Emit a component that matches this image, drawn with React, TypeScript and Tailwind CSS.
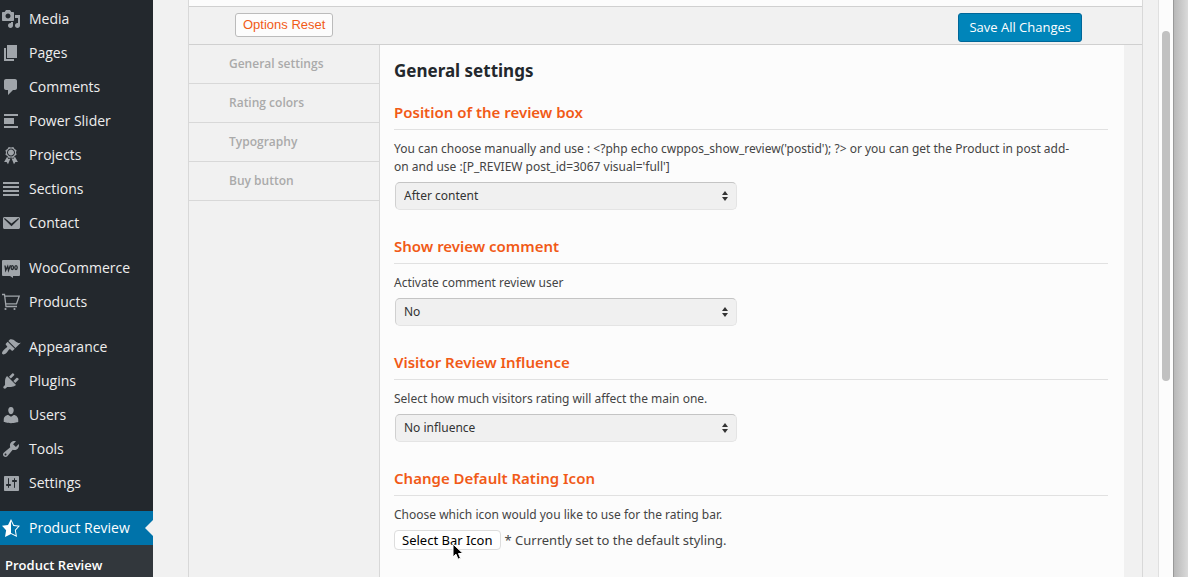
import type { ReactNode } from "react";

type MenuItem = { label: string; icon: ReactNode };

const path = (d: string) => <path fillRule="evenodd" d={d} />;

const menuGroups: MenuItem[][] = [
  [
    {
      label: "Media",
      icon: path(
        "M13 11V4c0-.55-.45-1-1-1h-1.67L9 1H5L3.67 3H2c-.55 0-1 .45-1 1v7c0 .55.45 1 1 1h10c.55 0 1-.45 1-1zM7 4.5c1.38 0 2.5 1.12 2.5 2.5S8.38 9.5 7 9.5 4.5 8.38 4.5 7 5.62 4.5 7 4.5zM14 6h5v10.5c0 1.38-1.12 2.5-2.5 2.5S14 17.88 14 16.5s1.12-2.5 2.5-2.5c.17 0 .34.02.5.05V9h-3V6zm-4 8.05V13h2v3.5c0 1.38-1.12 2.5-2.5 2.5S7 17.88 7 16.5 8.12 14 9.5 14c.17 0 .34.02.5.05z",
      ),
    },
    { label: "Pages", icon: path("M6 15V2h10v13H6zm-1 1h8v2H3V5h2v11z") },
    {
      label: "Comments",
      icon: path(
        "M5 2h9c1.1 0 2 .9 2 2v7c0 1.1-.9 2-2 2h-2l-5 5v-5H5c-1.1 0-2-.9-2-2V4c0-1.1.9-2 2-2z",
      ),
    },
    { label: "Power Slider", icon: path("M3 3h14v2H3zM3 7h10v6H3zM3 15h14v2H3z") },
    {
      label: "Projects",
      icon: path(
        "M4.46 5.16L5 7.46l-.54 2.29 2.01 1.24L7.7 13l2.3-.54 2.3.54 1.23-2.01 2.01-1.24L15 7.46l.54-2.3-2-1.24-1.24-2.01-2.3.55-2.29-.54-1.25 2zm5.55 6.34C7.79 11.5 6 9.71 6 7.49c0-2.2 1.79-3.99 4.01-3.99 2.2 0 3.99 1.79 3.99 3.99 0 2.22-1.79 4.01-3.99 4.01zM9.99 10.5C8.33 10.5 7 9.16 7 7.5c0-1.65 1.33-3 2.99-3S13 5.85 13 7.5c0 1.66-1.35 3-3.01 3zM13.83 11.6l-1.28 2.24-2.08-.47L13 19.2l1.4-2.2h2.5zM6.13 11.67l1.25 2.25 2.13-.51L7 19.2 5.6 17H3.1z",
      ),
    },
    { label: "Sections", icon: path("M2 3h16v2H2zM2 7h16v2H2zM2 11h16v2H2zM2 15h16v2H2z") },
    {
      label: "Contact",
      icon: path(
        "M3.5 4h14c.8 0 1.5.7 1.5 1.5v9c0 .8-.7 1.5-1.5 1.5h-14c-.8 0-1.5-.7-1.5-1.5v-9C2 4.7 2.7 4 3.5 4zM4 5.3c-.6-.3-1.2.3-.7.9l7.2 7 7.2-7c.5-.6-.1-1.2-.7-.9l-6.5 5.2z",
      ),
    },
  ],
  [
    {
      label: "WooCommerce",
      icon: (
        <>
          <path d="M2 2h16a1 1 0 0 1 1 1v14a1 1 0 0 1-1 1h-6v2l-3-2H2a1 1 0 0 1-1-1V3a1 1 0 0 1 1-1z" />
          <path
            d="M4 7.5l.7 4.8 2-4 .8 4 2-5"
            fill="none"
            stroke="#23282d"
            strokeWidth="1.4"
          />
          <ellipse cx="11.3" cy="9.6" rx="1.2" ry="1.9" fill="none" stroke="#23282d" strokeWidth="1.3" />
          <ellipse cx="15" cy="9.6" rx="1.2" ry="1.9" fill="none" stroke="#23282d" strokeWidth="1.3" />
        </>
      ),
    },
    {
      label: "Products",
      icon: (
        <>
          <path
            d="M1 2.5h2.5l1.5 12h11M4 4.2h14.2l-2.7 7.600H5"
            fill="none"
            stroke="currentColor"
            strokeWidth="1.3"
          />
          <circle cx="4.500" cy="17" r="1.1" />
          <circle cx="13.500" cy="17" r="1.1" />
        </>
      ),
    },
  ],
  [
    {
      label: "Appearance",
      icon: path(
        "M14.48 11.06L7.41 3.99l1.5-1.5c.5-.56 2.3-.47 3.51.32 1.21.8 1.43 1.28 2.91 2.1 1.18.64 2.45 1.26 4.45.85zm-.71.71L6.7 4.7 4.93 6.47c-.39.39-.39 1.02 0 1.41l1.06 1.06c.39.39.39 1.03 0 1.42-.6.6-1.43 1.11-2.21 1.69-.35.26-.7.53-1.01.84C1.43 14.23.4 16.08 1.4 17.07c.99 1 2.84-.03 4.18-1.36.31-.31.58-.66.85-1.02.57-.78 1.08-1.61 1.69-2.21.39-.39 1.02-.39 1.41 0l1.06 1.06c.39.39 1.02.39 1.41 0z",
      ),
    },
    {
      label: "Plugins",
      icon: path(
        "M13.11 4.36L9.87 7.6 8 5.73l3.24-3.24c.35-.34 1.05-.2 1.56.32.52.51.66 1.21.31 1.55zm-8 1.77l.91-1.12 9.01 9.01-1.19.84c-.71.71-2.63 1.16-3.82 1.16H6.14L4.9 17.26c-.59.59-1.54.59-2.12 0-.59-.58-.59-1.53 0-2.12l1.24-1.24v-3.88c0-1.13.4-3.19 1.09-3.89zm7.26 3.97l3.24-3.24c.34-.35 1.04-.21 1.55.31.52.51.66 1.21.31 1.55l-3.24 3.25z",
      ),
    },
    {
      label: "Users",
      icon: path(
        "M10 9.25c-2.27 0-2.73-3.44-2.73-3.44C7 4.02 7.82 2 9.97 2c2.16 0 2.98 2.02 2.71 3.81 0 0-.41 3.44-2.68 3.44zm0 2.57L12.72 10c2.39 0 4.52 2.33 4.52 4.53v2.49s-3.65 1.13-7.24 1.13c-3.65 0-7.24-1.13-7.24-1.13v-2.49c0-2.25 1.94-4.48 4.47-4.48z",
      ),
    },
    {
      label: "Tools",
      icon: path(
        "M16.68 9.77c-1.34 1.34-3.3 1.67-4.95.99l-5.41 6.52c-.99.99-2.59.99-3.58 0s-.99-2.59 0-3.57l6.52-5.42c-.68-1.65-.35-3.61.99-4.95 1.28-1.28 3.12-1.62 4.72-1.06l-2.89 2.89 2.82 2.82 2.86-2.87c.53 1.58.18 3.39-1.08 4.65zM3.81 16.21c.4.39 1.04.39 1.43 0 .4-.4.4-1.04 0-1.43-.39-.4-1.03-.4-1.43 0-.39.39-.39 1.03 0 1.43z",
      ),
    },
    {
      label: "Settings",
      icon: path(
        "M18 16V4c0-.55-.45-1-1-1H4c-.55 0-1 .45-1 1v13c0 .55.45 1 1 1h13c.55 0 1-.45 1-1zM8 11h1c.55 0 1 .45 1 1s-.45 1-1 1H8v1.5c0 .28-.22.5-.5.5s-.5-.22-.5-.5V13H6c-.55 0-1-.45-1-1s.45-1 1-1h1V5.5c0-.28.22-.5.5-.5s.5.22.5.5V11zm5-2h-1c-.55 0-1-.45-1-1s.45-1 1-1h1V5.5c0-.28.22-.5.5-.5s.5.22.5.5V7h1c.55 0 1 .45 1 1s-.45 1-1 1h-1v5.5c0 .28-.22.5-.5.5s-.5-.22-.5-.5V9z",
      ),
    },
  ],
];

const tabs = ["General settings", "Rating colors", "Typography", "Buy button"];

function Icon({ children }: { children: ReactNode }) {
  return (
    <svg viewBox="0 0 20 20" className="size-5 shrink-0" fill="currentColor" aria-hidden="true">
      {children}
    </svg>
  );
}

function AdminMenu() {
  return (
    <nav className="w-[153px] shrink-0 bg-[#23282d] pt-0.5 font-['Open_Sans',sans-serif] text-sm text-[#eee]">
      {menuGroups.map((group) => (
        <ul key={group[0].label} className="mb-[11px]">
          {group.map((item) => (
            <li key={item.label}>
              <a href="#" className="flex h-[34px] items-center gap-2 pl-px">
                <span className="text-[#a0a5aa]">
                  <Icon>{item.icon}</Icon>
                </span>
                {item.label}
              </a>
            </li>
          ))}
        </ul>
      ))}
      <a href="#" className="relative flex h-[34px] items-center gap-2 bg-[#0073aa] pl-px text-white">
        <Icon>
          {path(
            "M10 1L7 7l-6 .75 4.13 4.62L4 19l6-3 6 3-1.12-6.63L19 7.75 13 7zm0 2.24l2.34 4.69 4.65.58-3.18 3.56.87 5.15-4.68-2.34v-11.64z",
          )}
        </Icon>
        Product Review
        <span className="absolute top-1/2 right-0 -translate-y-1/2 border-y-8 border-r-8 border-y-transparent border-r-[#f1f1f1]" />
      </a>
      <div className="bg-[#32373c] pt-2.5 pb-6 pl-[5px]">
        <a href="#" className="block text-[13px] leading-5 font-semibold text-white">
          Product Review
        </a>
      </div>
    </nav>
  );
}

function Section({
  id,
  title,
  description,
  children,
}: {
  id: string;
  title: string;
  description: ReactNode;
  children: ReactNode;
}) {
  return (
    <section className="mb-[26px]">
      <h3 className="mb-2.5 border-b border-[#e1e1e1] pb-[7px] text-[15px] leading-5 font-semibold text-[#f15a17]">
        {title}
      </h3>
      <label htmlFor={id} className="block text-xs leading-[18px] text-[#444]">
        {description}
      </label>
      {children}
    </section>
  );
}

function SelectField({ id, options }: { id: string; options: string[] }) {
  return (
    <div className="relative mt-1.5 ml-px w-[342px]">
      <select
        id={id}
        className="block h-7 w-full appearance-none rounded-[5px] border border-[#e4e4e4] border-t-[#c4c4c4] border-l-[#d0d0d0] bg-[#f0f0f0] px-2 text-xs text-[#333]"
      >
        {options.map((option) => (
          <option key={option}>{option}</option>
        ))}
      </select>
      <svg
        viewBox="0 0 6 10"
        className="pointer-events-none absolute top-[9px] right-[9px] h-2.5 w-1.5"
        fill="#333"
        aria-hidden="true"
      >
        <path d="M3 0l3 4H0zM3 10L0 6h6z" />
      </svg>
    </div>
  );
}

export default function App() {
  return (
    <div className="flex h-screen overflow-hidden bg-[#f1f1f1] font-['Noto_Sans',sans-serif]">
      <AdminMenu />
      <main className="ml-[35px] flex min-w-0 flex-1 flex-col border-x border-[#d8d8d8]">
        <div className="h-1.5 shrink-0 bg-[#fcfcfc]" />
        <header className="flex h-[39px] shrink-0 items-start justify-between border-y border-[#d0d0d0] pt-1.5 pr-[60px] pl-[46px]">
          <button className="h-6 rounded-[3px] border border-[#bbb] bg-[#fcfcfc] px-[7px] font-['Liberation_Sans',sans-serif] text-[13px] leading-[22px] text-[#f15a17]">
            Options Reset
          </button>
          <button className="h-[29px] rounded-[3px] border border-[#006799] bg-[#0085ba] px-2.5 font-['Open_Sans',sans-serif] text-[13px] text-white">
            Save All Changes
          </button>
        </header>
        <div className="flex min-h-0 flex-1">
          <ul className="w-[191px] shrink-0 border-r border-[#d8d8d8] font-['Open_Sans',sans-serif] text-xs font-semibold text-[#aaa]">
            {tabs.map((tab) => (
              <li key={tab} className="border-b border-[#d8d8d8]">
                <a href="#" className="block pl-10 leading-[38px]">
                  {tab}
                </a>
              </li>
            ))}
          </ul>
          <div className="mr-[18px] flex-1 overflow-hidden bg-[#fcfcfc] pt-3.5 pr-4 pl-3.5">
            <h2 className="mb-[19px] text-[17px] leading-6 font-bold text-[#23282d]">General settings</h2>
            <Section
              id="position"
              title="Position of the review box"
              description={
                <>
                  You can choose manually and use : {"<?php echo cwppos_show_review('postid'); ?>"} or you can get
                  the Product in post add-
                  <br />
                  on and use :[P_REVIEW post_id=3067 visual='full']
                </>
              }
            >
              <SelectField id="position" options={["After content", "Before content", "Manually placed"]} />
            </Section>
            <Section id="comment" title="Show review comment" description="Activate comment review user">
              <SelectField id="comment" options={["No", "Yes"]} />
            </Section>
            <Section
              id="influence"
              title="Visitor Review Influence"
              description="Select how much visitors rating will affect the main one."
            >
              <SelectField id="influence" options={["No influence", "50%", "100%"]} />
            </Section>
            <Section
              id="icon"
              title="Change Default Rating Icon"
              description="Choose which icon would you like to use for the rating bar."
            >
              <div className="mt-1.5 flex items-center gap-1 text-[13px] leading-5 text-[#444]">
                <button
                  id="icon"
                  className="relative h-5 rounded-[4px] border border-[#ddd] bg-white px-[7px] leading-[18px] text-black"
                >
                  Select Bar Icon
                  <svg
                    viewBox="0 0 12 18"
                    className="absolute top-3 left-[57px] h-[18px] w-3"
                    aria-hidden="true"
                  >
                    <path
                      d="M1 1v13l3-2.8 2 5 2.5-1-2-4.7H11z"
                      fill="#000"
                      stroke="#fff"
                      strokeWidth="1"
                    />
                  </svg>
                </button>
                <span>* Currently set to the default styling.</span>
              </div>
            </Section>
          </div>
        </div>
      </main>
      <div className="ml-[15px] w-[15px] shrink-0 border-l border-[#e0e0e0] bg-[#fcfcfc] pt-[31px] pl-[3px]">
        <div className="h-[350px] w-2 rounded-full bg-[#c1c1c1]" />
      </div>
      <div className="w-[15px] shrink-0 border-l border-[#999] bg-linear-to-r from-[#b8b8b8] to-[#dadada]" />
    </div>
  );
}
